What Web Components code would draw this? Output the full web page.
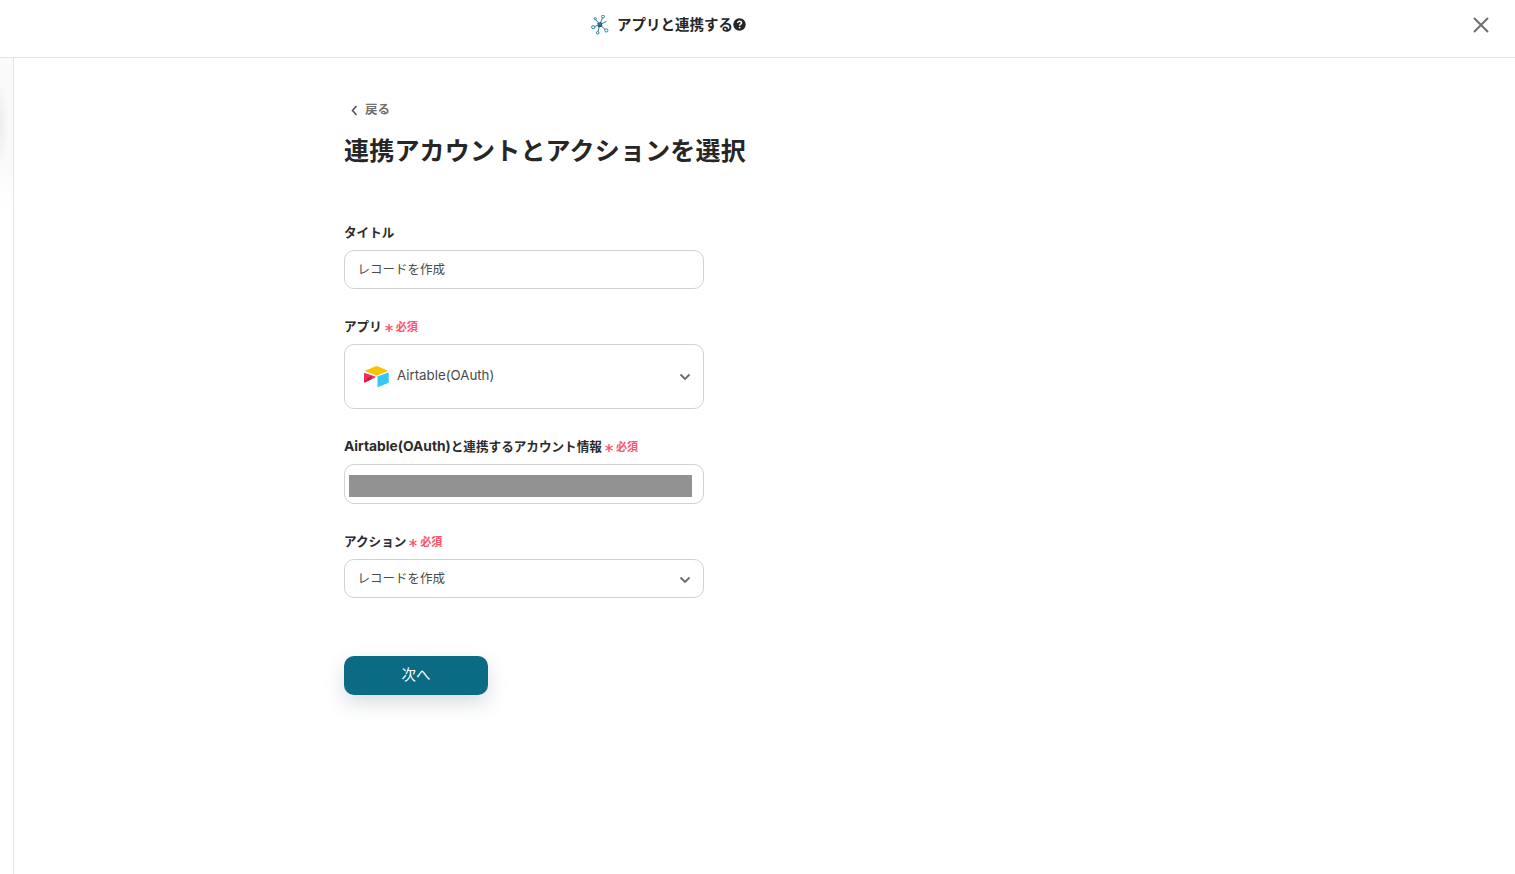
<!DOCTYPE html>
<html lang="ja">
<head>
<meta charset="utf-8">
<title>アプリと連携する</title>
<style>
  html, body { margin: 0; height: 100%; background: #fff; }
  body { font-family: Inter, "Noto Sans CJK JP", "Noto Sans", sans-serif; color: #2b2b2b; overflow: hidden; }
</style>
</head>
<body>
<flow-modal>
  <flow-header slot="header" title-text="アプリと連携する"></flow-header>
  <back-link>戻る</back-link>
  <page-title>連携アカウントとアクションを選択</page-title>
  <form-field label="タイトル" style="margin-top:54px">
    <field-box>レコードを作成</field-box>
  </form-field>
  <form-field label="アプリ" required style="margin-top:28px">
    <field-box tall arrow><airtable-logo slot="icon"></airtable-logo>Airtable(OAuth)</field-box>
  </form-field>
  <form-field app="Airtable(OAuth)" label="と連携するアカウント情報" required style="margin-top:28px">
    <field-box masked></field-box>
  </form-field>
  <form-field label="アクション" required style="margin-top:28px">
    <field-box arrow>レコードを作成</field-box>
  </form-field>
  <next-button style="margin-top:58px">次へ</next-button>
</flow-modal>

<script>
class FlowModal extends HTMLElement {
  constructor() {
    super();
    this.attachShadow({ mode: "open" });
    this.shadowRoot.innerHTML = `
      <style>
        :host { display: flex; flex-direction: column; height: 874px; }
        .body { flex: 1; display: flex; min-height: 0; }
        .side {
          width: 13px;
          border-right: 1px solid #e4e4e4;
          background:
            radial-gradient(ellipse 9px 42px at 0 66px, #ececec, rgba(236, 236, 236, 0)),
            linear-gradient(180deg, #fafafa 0, #fafafa 110px, #fff 150px);
        }
        .main { flex: 1; padding: 38px 0 0 330px; display: flex; flex-direction: column; align-items: flex-start; }
      </style>
      <slot name="header"></slot>
      <div class="body">
        <div class="side"></div>
        <div class="main"><slot></slot></div>
      </div>
    `;
  }
}

class FlowHeader extends HTMLElement {
  constructor() {
    super();
    this.attachShadow({ mode: "open" });
    this.shadowRoot.innerHTML = `
      <style>
        :host { display: flex; height: 58px; padding: 0 178px 8px 0; box-sizing: border-box; border-bottom: 1px solid #e4e4e4; align-items: center; justify-content: center; position: relative; }
        .title { font-size: 14.5px; font-weight: 700; color: #262626; margin: 0 0 0 8px; line-height: 20px; }
        .close { position: absolute; right: 25px; top: 16px; width: 18px; height: 18px; }
        svg { display: block; }
      </style>
      <svg width="18" height="20" viewBox="0 0 18 20" fill="none" stroke="#2a7f9c" stroke-width="1">
        <path d="M8.7 9.7 L11.4 3 M8.7 9.7 L5 4.6 M8.7 9.7 L3.7 11.6 M8.7 9.7 L7 16.4 M8.7 9.7 L14 14.4 M8.7 9.7 L15.6 6.4"/>
        <path d="M6.9 8.2 L10.2 7.7 L10.9 11.1 L7.6 11.9 Z" stroke="#1d4f63" fill="#1d4f63" fill-opacity=".35"/>
        <circle cx="12" cy="1.6" r="1.4"/>
        <circle cx="4.3" cy="3.7" r="1.1"/>
        <circle cx="2.2" cy="12.2" r="1.6"/>
        <circle cx="6.7" cy="17.8" r="1.3"/>
        <circle cx="15.3" cy="15.4" r="1.6"/>
      </svg>
      <span class="title"></span>
      <svg class="help" width="13" height="13" viewBox="0 0 13 13">
        <circle cx="6.5" cy="6.5" r="6.2" fill="#262626"/>
        <path d="M4.6 5 C4.6 3.8 5.4 3.2 6.5 3.2 C7.7 3.2 8.5 3.9 8.5 4.9 C8.5 6.2 6.6 6.2 6.6 7.7" fill="none" stroke="#fff" stroke-width="1.4"/>
        <circle cx="6.6" cy="9.6" r="0.9" fill="#fff"/>
      </svg>
      <svg class="close" viewBox="0 0 18 18" fill="none" stroke="#6f6f6f" stroke-width="2">
        <path d="M2 2 L16 16 M16 2 L2 16"/>
      </svg>
    `;
    this.shadowRoot.querySelector(".title").textContent = this.getAttribute("title-text");
  }
}

class BackLink extends HTMLElement {
  constructor() {
    super();
    this.attachShadow({ mode: "open" });
    this.shadowRoot.innerHTML = `
      <style>
        :host { display: flex; align-items: center; height: 24px; padding-left: 7px; font-size: 12.5px; font-weight: 700; color: #707070; }
        svg { margin-right: 7px; margin-top: 5px; }
      </style>
      <svg width="7" height="11" viewBox="0 0 7 11" fill="none" stroke="#555" stroke-width="1.6"><path d="M5.5 1 L1.5 5.5 L5.5 10"/></svg>
      <slot></slot>
    `;
  }
}

class PageTitle extends HTMLElement {
  constructor() {
    super();
    this.attachShadow({ mode: "open" });
    this.shadowRoot.innerHTML = `
      <style>
        :host { display: block; margin-top: 13px; font-size: 25px; font-weight: 700; line-height: 36px; color: #262626; letter-spacing: 0.2px; white-space: nowrap; }
      </style>
      <slot></slot>
    `;
  }
}

class FormField extends HTMLElement {
  constructor() {
    super();
    this.attachShadow({ mode: "open" });
    this.shadowRoot.innerHTML = `
      <style>
        :host { display: block; width: 360px; }
        .label { display: flex; align-items: center; height: 18px; margin-bottom: 9px; font-size: 12.6px; font-weight: 700; color: #2b2b2b; white-space: nowrap; }
        .text { margin-top: -2px; }
        .app { font-size: 13.8px; }
        .req { display: none; align-items: center; margin-left: 3px; font-size: 11px; font-weight: 700; color: #fb5468; }
        :host([required]) .req { display: flex; }
        .req span { margin-top: -1px; }
        svg { margin-right: 3px; margin-top: 3px; }
      </style>
      <div class="label">
        <span class="text"><span class="app"></span><span class="name"></span></span>
        <span class="req">
          <svg width="8" height="8" viewBox="0 0 8 8" fill="none" stroke="#fb5468" stroke-width="1.4"><path d="M4 0 V8 M.5 2 L7.5 6 M7.5 2 L.5 6"/></svg>
          <span>必須</span>
        </span>
      </div>
      <slot></slot>
    `;
    this.shadowRoot.querySelector(".app").textContent = this.getAttribute("app") || "";
    this.shadowRoot.querySelector(".name").textContent = this.getAttribute("label");
  }
}

class FieldBox extends HTMLElement {
  constructor() {
    super();
    this.attachShadow({ mode: "open" });
    this.shadowRoot.innerHTML = `
      <style>
        :host { display: flex; align-items: center; box-sizing: border-box; height: 39px; padding: 0 12px 0 12.5px; border: 1px solid #cfd3d6; border-radius: 10px; background: #fff; font-size: 12.5px; color: #4a4a4a; }
        :host([tall]) { height: 65px; padding-left: 19px; font-size: 13.3px; }
        :host([tall]) .text { margin-top: -3px; }
        :host([masked]) { height: 40px; padding: 10px 11px 6px 4px; align-items: stretch; }
        .mask { display: none; flex: 1; background: #929292; }
        :host([masked]) .mask { display: block; }
        .text { flex: 1; white-space: nowrap; margin-top: -2px; }
        :host([masked]) .text { display: none; }
        .arrow { display: none; }
        :host([arrow]) .arrow { display: block; margin-top: 2px; }
        :host([tall]) .arrow { margin-top: 1px; }
      </style>
      <slot name="icon"></slot>
      <div class="mask"></div>
      <span class="text"><slot></slot></span>
      <svg class="arrow" width="12" height="8" viewBox="0 0 12 8" fill="none" stroke="#6a6a6a" stroke-width="1.8"><path d="M1.5 1.5 L6 6 L10.5 1.5"/></svg>
    `;
  }
}

class AirtableLogo extends HTMLElement {
  constructor() {
    super();
    this.attachShadow({ mode: "open" });
    this.shadowRoot.innerHTML = `
      <style>
        :host { display: block; width: 25px; height: 22px; margin-right: 8px; }
        svg { display: block; }
      </style>
      <svg width="25" height="22" viewBox="0 0 25 22">
        <path d="M11 .6 L2 4.3 C1.5 4.5 1.5 5.2 2 5.4 L11 9 C12 9.4 13 9.4 14 9 L23 5.4 C23.5 5.2 23.5 4.5 23 4.3 L14 .6 C13 .2 12 .2 11 .6 Z" fill="#fcc200"/>
        <path d="M13.5 11 L13.5 20.4 C13.5 20.8 13.9 21.1 14.3 20.9 L24.2 17.1 C24.5 17 24.7 16.7 24.7 16.4 L24.7 7 C24.7 6.6 24.3 6.3 23.9 6.5 L14 10.3 C13.7 10.4 13.5 10.7 13.5 11 Z" fill="#35c6f4"/>
        <path d="M11.2 11.4 L.9 16.4 C.5 16.6 0 16.3 0 15.9 L0 7.6 C0 7.2 .5 6.9 .9 7.1 L11.2 10.5 C11.6 10.7 11.6 11.2 11.2 11.4 Z" fill="#f82b60"/>
        <path d="M7.5 9.4 L0.4 15 C.2 15.8 .4 16.5 .9 16.4 L7.5 13.2 Z" fill="#c51f4c"/>
      </svg>
    `;
  }
}

class NextButton extends HTMLElement {
  constructor() {
    super();
    this.attachShadow({ mode: "open" });
    this.shadowRoot.innerHTML = `
      <style>
        :host { display: block; }
        button {
          display: block; width: 144px; height: 39px; padding: 0 0 4px; border: 0; border-radius: 10px;
          background: #0b6a84; color: #fff; font: 400 14.5px Inter, "Noto Sans CJK JP", "Noto Sans", sans-serif;
          box-shadow: 0 8px 20px rgba(60, 80, 100, 0.2);
        }
      </style>
      <button type="button"><slot></slot></button>
    `;
  }
}

customElements.define("flow-modal", FlowModal);
customElements.define("flow-header", FlowHeader);
customElements.define("back-link", BackLink);
customElements.define("page-title", PageTitle);
customElements.define("form-field", FormField);
customElements.define("field-box", FieldBox);
customElements.define("airtable-logo", AirtableLogo);
customElements.define("next-button", NextButton);
</script>
</body>
</html>
